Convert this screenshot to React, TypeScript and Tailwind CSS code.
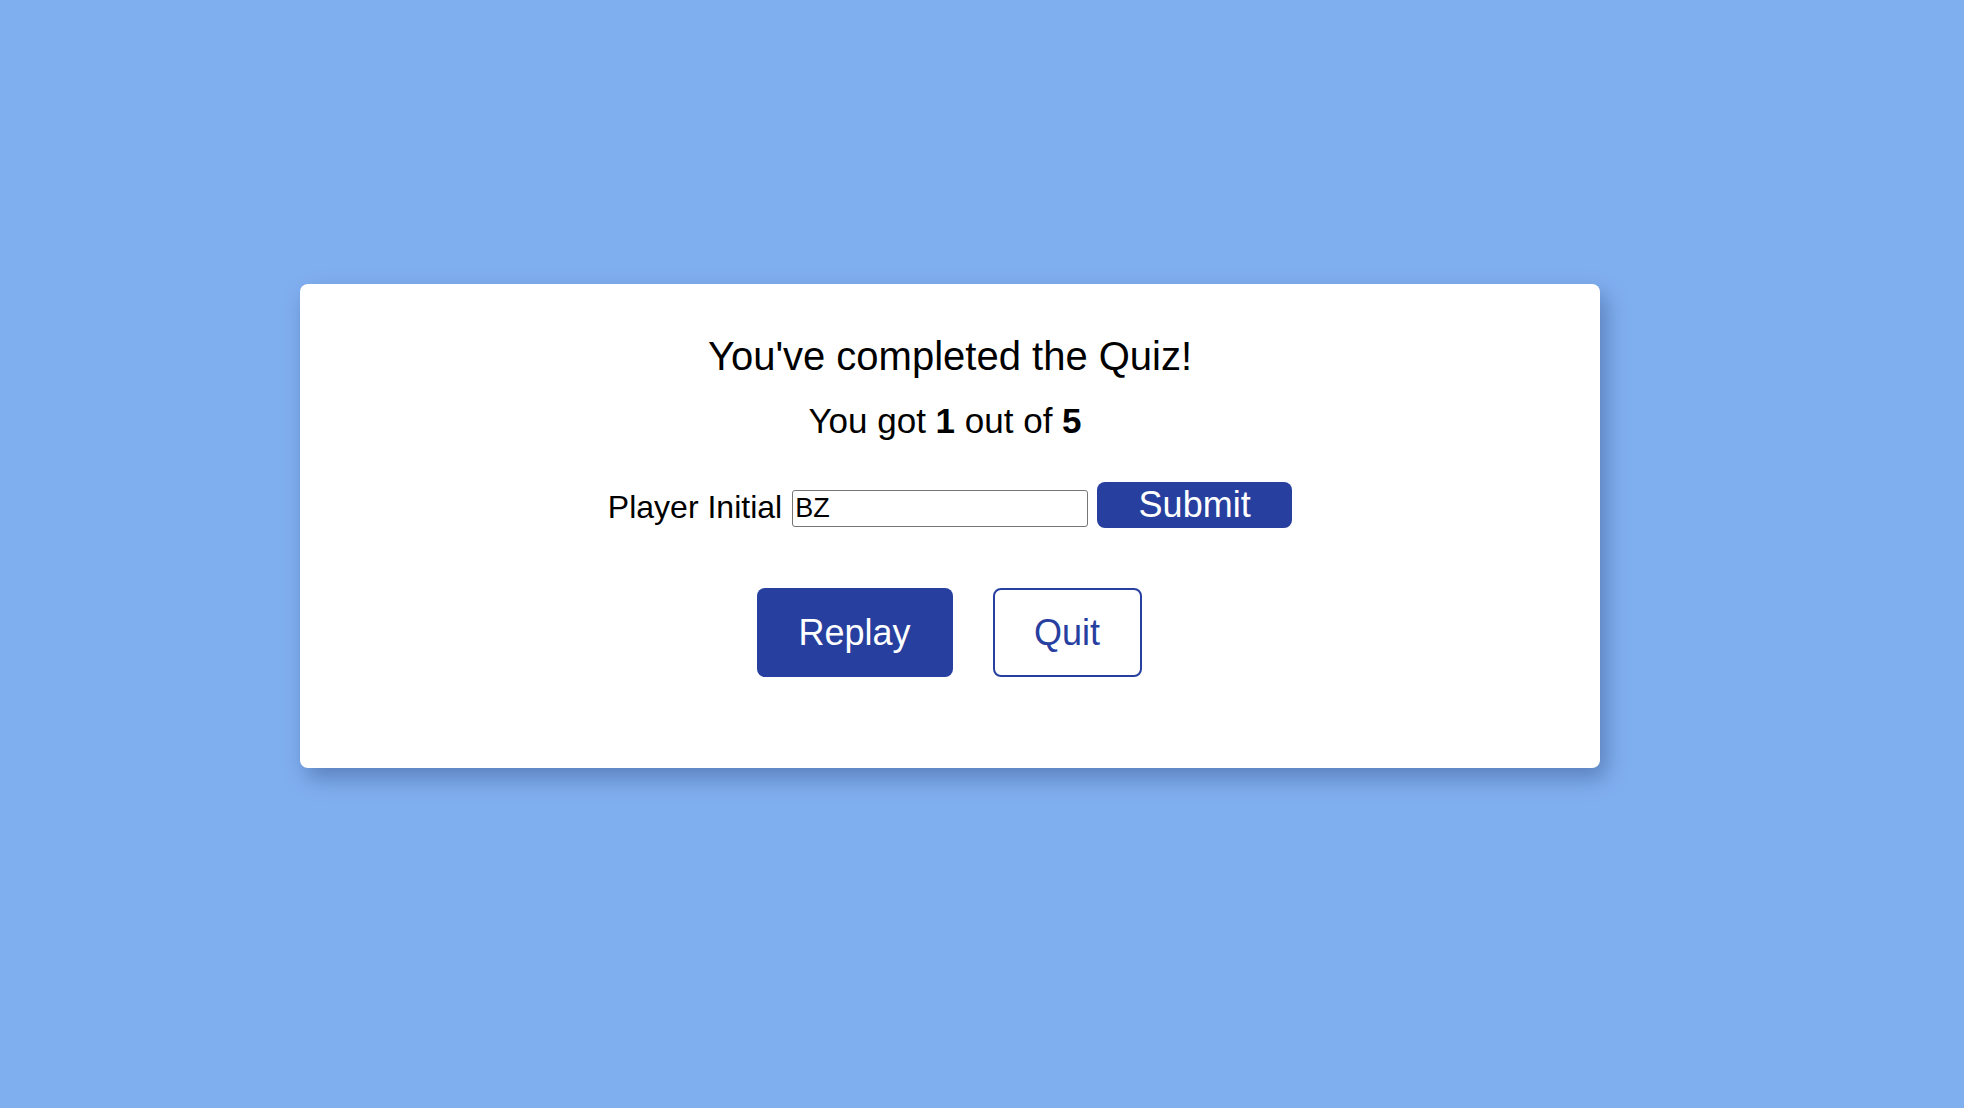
import React from "react";

export default function App() {
  return (
    <div
      className="min-h-screen w-full bg-[#80aff0] pt-[284px] pl-[300px] overflow-hidden"
      style={{ fontFamily: '"Liberation Sans", Arial, Helvetica, sans-serif' }}
    >
      <div className="w-[1300px] bg-white rounded-[8px] shadow-[6px_10px_22px_rgba(20,40,90,0.35)] flex flex-col items-center pt-[49px] pb-[91px]">
        <h2 className="text-[40px] leading-[46px] text-black font-normal">
          You've completed the Quiz!
        </h2>
        <p className="mt-[22px] mr-[10px] text-[35px] leading-[40px] text-black">
          You got <b className="font-bold">1</b> out of <b className="font-bold">5</b>
        </p>
        <div className="mt-[41px] flex items-center">
          <label className="text-[32px] leading-[36px] text-black mt-[3px]">Player Initial</label>
          <input
            defaultValue="BZ"
            className="ml-[10px] mt-[7px] w-[296px] h-[37px] border border-[#767676] rounded-[3px] px-[2px] text-[27px] text-black bg-white outline-none"
            style={{ fontFamily: '"Liberation Sans", Arial, sans-serif' }}
          />
          <button className="ml-[9px] w-[195px] h-[46px] rounded-[8px] bg-[#27409f] text-white text-[36px] leading-[46px]">
            Submit
          </button>
        </div>
        <div className="mt-[60px] mr-[2px] flex gap-[40px]">
          <button className="w-[196px] h-[89px] rounded-[8px] bg-[#27409f] text-white text-[36px]">
            Replay
          </button>
          <button className="w-[149px] h-[89px] rounded-[8px] bg-white border-2 border-[#27409f] text-[#27409f] text-[36px]">
            Quit
          </button>
        </div>
      </div>
    </div>
  );
}
